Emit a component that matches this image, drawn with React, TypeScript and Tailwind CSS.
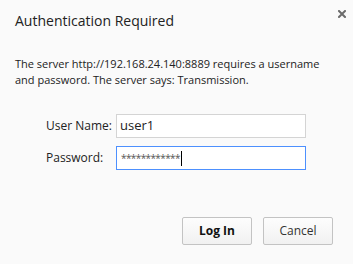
import React from "react";

const App = () => {
  return (
    <div
      className="w-[353px] h-[264px] bg-[#fafafa] text-[#222] flex flex-col overflow-hidden"
      style={{ fontFamily: '"Open Sans", "Noto Sans", sans-serif' }}
    >
      <div className="flex justify-between pl-[15px] pr-[7px]">
        <h1 className="pt-[11px] text-[14px] leading-[20px] text-[#222]">
          Authentication Required
        </h1>
        <button className="mt-[10px] w-[8px] h-[8px]" aria-label="Close">
          <svg viewBox="0 0 8 8" width="8" height="8">
            <path
              d="M1 1 L7 7 M7 1 L1 7"
              stroke="#6b6b6b"
              strokeWidth="2"
              strokeLinecap="square"
            />
          </svg>
        </button>
      </div>

      <p className="mt-[25px] px-[15px] text-[11px] leading-[16px] text-[#222]">
        The server http://192.168.24.140:8889 requires a username
        <br />
        and password. The server says: Transmission.
      </p>

      <div className="mt-[26px] pl-[46px] flex flex-col gap-[8px] text-[12px]">
        <div className="flex items-center">
          <label className="w-[70px]">User Name:</label>
          <div className="w-[190px] h-[24px] border border-[#d4d4d4] bg-white px-[3px] flex items-center text-[13px]">
            user1
          </div>
        </div>
        <div className="flex items-center">
          <label className="w-[70px]">Password:</label>
          <div className="w-[190px] h-[24px] border border-[#4d90fe] bg-white px-[4px] flex items-center">
            <span className="text-[#555] text-[10px] tracking-[-0.6px]">************</span>
            <span className="ml-[1px] w-[1px] h-[15px] bg-black" />
          </div>
        </div>
      </div>

      <div className="mt-auto mb-[19px] mr-[20px] flex justify-end gap-[11px] text-[12px]">
        <button className="w-[70px] h-[28px] rounded-[2px] border border-[#c3c3c3] bg-gradient-to-b from-[#fdfdfd] to-[#f1f1f1] font-bold text-[#111]">
          Log In
        </button>
        <button className="w-[70px] h-[28px] rounded-[2px] border border-[#c3c3c3] bg-gradient-to-b from-[#fdfdfd] to-[#f1f1f1] text-[#333]">
          Cancel
        </button>
      </div>
    </div>
  );
};

export default App;
